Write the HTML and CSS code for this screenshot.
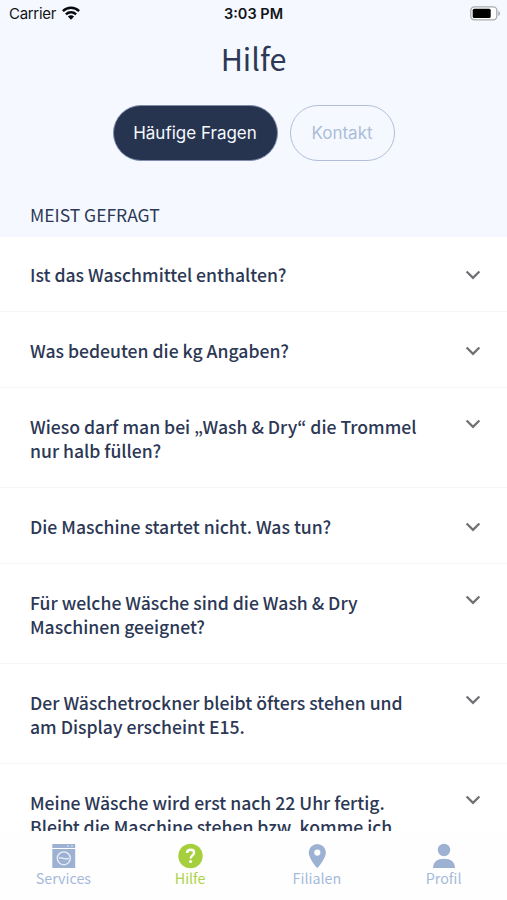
FILE: index.html
```html
<!DOCTYPE html>
<html lang="de">
<head>
<meta charset="utf-8">
<title>Hilfe</title>
<link rel="stylesheet" href="styles.css">
</head>
<body>
<svg class="defs" aria-hidden="true"><symbol id="chevron" viewBox="0 0 16 10"><path d="M1.6 1.5 8 7.8 14.4 1.5" fill="none" stroke="#707174" stroke-width="2.3"/></symbol></svg>
<div class="app">
  <header class="status">
    <div class="carrier"><span>Carrier</span>
      <svg width="18" height="14" viewBox="0 0 18 14"><g fill="none" stroke="#080a0c" stroke-width="2.4"><path d="M.9 5.1a11.6 11.6 0 0 1 16.2 0"/><path d="M3.9 8.3a7.3 7.3 0 0 1 10.2 0"/></g><path d="M9 13.7 5.9 10.5a4.4 4.4 0 0 1 6.2 0z" fill="#080a0c"/></svg>
    </div>
    <div class="time">3:03 PM</div>
    <svg class="battery" width="31" height="15" viewBox="0 0 31 15"><rect x=".8" y=".8" width="26" height="13" rx="3.6" fill="#fff" stroke="#a9abae" stroke-width="1.3"/><rect x="2.7" y="2.7" width="18" height="9.3" rx="1.6" fill="#000"/><path d="M28.3 5v5c2.2-.9 2.2-4.1 0-5z" fill="#a9abae"/></svg>
  </header>
  <h1>Hilfe</h1>
  <div class="tabs"><button class="tab active">Häufige Fragen</button><button class="tab">Kontakt</button></div>
  <h2>MEIST GEFRAGT</h2>
  <main class="list">
    <div class="row"><p>Ist das Waschmittel enthalten?</p><svg class="chev"><use href="#chevron"/></svg></div>
    <div class="row"><p>Was bedeuten die kg Angaben?</p><svg class="chev"><use href="#chevron"/></svg></div>
    <div class="row two"><p>Wieso darf man bei „Wash &amp; Dry“ die Trommel<br>nur halb füllen?</p><svg class="chev"><use href="#chevron"/></svg></div>
    <div class="row"><p>Die Maschine startet nicht. Was tun?</p><svg class="chev"><use href="#chevron"/></svg></div>
    <div class="row two"><p>Für welche Wäsche sind die Wash &amp; Dry<br>Maschinen geeignet?</p><svg class="chev"><use href="#chevron"/></svg></div>
    <div class="row two"><p>Der Wäschetrockner bleibt öfters stehen und<br>am Display erscheint E15.</p><svg class="chev"><use href="#chevron"/></svg></div>
    <div class="row two"><p>Meine Wäsche wird erst nach 22 Uhr fertig.<br>Bleibt die Maschine stehen bzw. komme ich</p><svg class="chev"><use href="#chevron"/></svg></div>
  </main>
  <nav class="nav">
    <a class="item"><svg width="26" height="26" viewBox="0 0 26 26"><path d="M2.300 1h22.900v3.900H2.300zM2.300 6h22.900v19H2.300z" fill="#9db1d2"/><path d="M17 3h2M21 3h2" stroke="#dce5f2" stroke-width="1.2"/><circle cx="13.800" cy="15.3" r="6.5" fill="none" stroke="#e9f0f9" stroke-width="1.3"/><path d="M8.800 15.200c2.800-1.400 4 1.600 10 .3" fill="none" stroke="#e9f0f9" stroke-width="1.3"/></svg><span>Services</span></a>
    <a class="item on"><svg width="26" height="26" viewBox="0 0 26 26"><circle cx="13.500" cy="13" r="12.2" fill="#a5cf3d"/><path d="M10.100 10c.1-2 1.500-3.200 3.600-3.200 2 0 3.400 1.100 3.400 2.900 0 2.600-3.400 2.800-3.400 5.700" fill="none" stroke="#fff" stroke-width="2.4"/><circle cx="13.600" cy="18.500" r="1.6" fill="#fff"/></svg><span>Hilfe</span></a>
    <a class="item"><svg width="26" height="26" viewBox="0 0 26 26"><path fill-rule="evenodd" d="M13.300 .9a8.600 8.600 0 0 0-8.600 8.600C4.700 15.500 13.300 25.300 13.300 25.300s8.600-9.800 8.600-15.800A8.600 8.600 0 0 0 13.300 .9zm0 5.600a3.100 3.100 0 1 1 0 6.200 3.100 3.100 0 0 1 0-6.200z" fill="#9db1d2"/></svg><span>Filialen</span></a>
    <a class="item"><svg width="26" height="26" viewBox="0 0 26 26"><circle cx="13" cy="7" r="6.2" fill="#9db1d2"/><path d="M2 25c.2-6.300 4.400-9.300 11-9.300s10.800 3 11 9.300z" fill="#9db1d2"/></svg><span>Profil</span></a>
  </nav>
</div>
</body>
</html>
```

FILE: styles.css
```css
* { box-sizing: border-box; }
body { margin: 0; }
.defs { display: none; }
.app {
  width: 507px;
  height: 900px;
  display: flex;
  flex-direction: column;
  overflow: hidden;
  background: #f5f9ff;
  color: #2c3855;
  font-family: "Noto Sans CJK KR", "Noto Sans CJK SC", sans-serif;
}
svg { display: block; flex: none; }
.status {
  height: 28px;
  flex: none;
  display: grid;
  grid-template-columns: 1fr auto 1fr;
  align-items: center;
  padding: 0 7px 0 9px;
  color: #111418;
  font: 15px/28px Inter, sans-serif;
}
.carrier { display: flex; align-items: center; gap: 6px; letter-spacing: -.3px; }
.carrier svg { margin-top: -2px; }
.time { font-weight: 600; font-size: 14.5px; margin-left: -2px; }
.battery { justify-self: end; margin-top: -2px; margin-right: -1px; }
h1 {
  margin: 10px 0 0;
  height: 41px;
  flex: none;
  text-align: center;
  font-size: 30.5px;
  font-weight: 400;
  line-height: 41px;
}
.tabs {
  display: flex;
  flex: none;
  justify-content: center;
  gap: 12px;
  margin-top: 26px;
}
.tab {
  width: 105px;
  height: 56px;
  padding: 0;
  border: 1px solid #b0bfd9;
  border-radius: 28px;
  background: transparent;
  color: #acbdd8;
  font: 17px/54px Inter, sans-serif;
}
.tab.active { width: 165px; background: #27344f; border-color: #7e8cae; color: #f5f9ff; }
h2 {
  height: 76px;
  flex: none;
  margin: 0;
  padding: 41px 30px 0;
  font-size: 17.5px;
  font-weight: 400;
  line-height: 25px;
}
.list { flex: 1; min-height: 0; overflow: hidden; background: #fff; }
.row {
  height: 76px;
  display: flex;
  justify-content: space-between;
  padding: 27px 26px 0 30px;
  border-bottom: 1px solid #f5f6f8;
}
.row:first-child { height: 75px; padding-top: 26px; }
.row.two { height: 100px; }
.row p {
  margin: 0;
  white-space: nowrap;
  font-size: 17.6px;
  font-weight: 500;
  line-height: 24.4px;
}
.chev { width: 16px; height: 10px; margin-top: 7px; }
.two .chev { margin-top: 4px; }
.nav {
  height: 69px;
  flex: none;
  display: grid;
  grid-template-columns: repeat(4, 1fr);
  background: #fefeff;
}
.item {
  display: flex;
  flex-direction: column;
  align-items: center;
  padding-top: 12px;
  color: #a5bad9;
  font-size: 14.3px;
  line-height: 18px;
}
.item.on { color: #acd34a; }
```
